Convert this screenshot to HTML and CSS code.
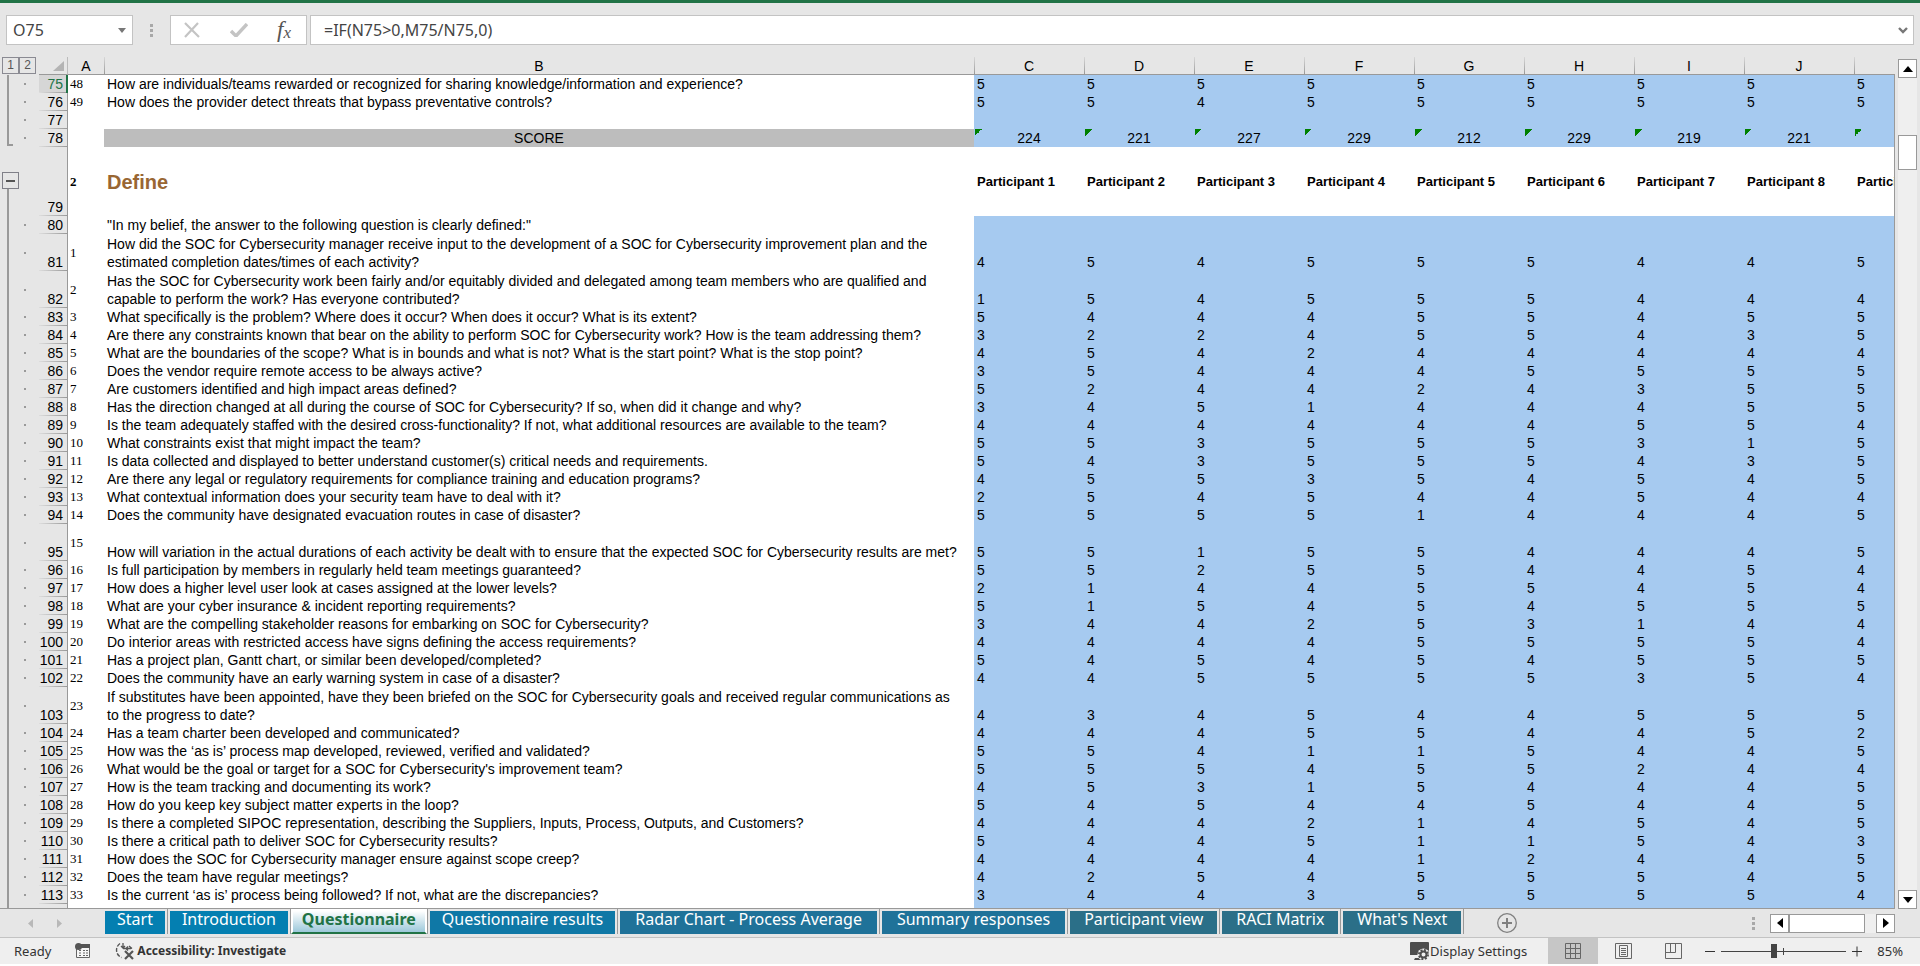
FILE: index.html
```html
<!DOCTYPE html>
<html lang="en">
<head>
<meta charset="utf-8">
<title>Questionnaire</title>
<link rel="stylesheet" href="styles.css">
</head>
<body>
<header class="formula-bar">
  <div class="name-box">
    <input class="name-input" aria-label="Name box" value="O75">
    <button class="plain" aria-label="Name list"><svg width="8" height="5" viewBox="0 0 8 5"><path d="M0 0h8L4 5z" fill="#777"/></svg></button>
  </div>
  <span class="grip"></span>
  <div class="fx-box">
    <button class="plain" aria-label="Cancel"><svg width="18" height="16" viewBox="0 0 18 16"><path d="M2 1l14 14M15 1L2 15" stroke="#c4c4c4" stroke-width="2.2" fill="none"/></svg></button>
    <button class="plain" aria-label="Enter"><svg width="18" height="14" viewBox="0 0 18 14"><path d="M1 8l5 5L17 1" stroke="#c4c4c4" stroke-width="3.4" fill="none"/></svg></button>
    <button class="plain fx" aria-label="Insert function">f<span class="fx-x">x</span></button>
  </div>
  <div class="formula-box">
    <input class="formula-input" aria-label="Formula" value="=IF(N75&gt;0,M75/N75,0)">
    <button class="plain" aria-label="Expand formula bar"><svg width="10" height="7" viewBox="0 0 10 7"><path d="M1 1l4 4 4-4" stroke="#777" stroke-width="2.4" fill="none"/></svg></button>
  </div>
</header>

<main class="workspace">
  <div class="sheet">
    <table class="grid">
      <colgroup><col class="c-gutter"><col class="c-head"><col class="c-a"><col class="c-b"><col class="c-n"><col class="c-n"><col class="c-n"><col class="c-n"><col class="c-n"><col class="c-n"><col class="c-n"><col class="c-n"><col></colgroup>
      <thead>
        <tr><td class="levels"><div class="level-row"><button class="level">1</button><button class="level">2</button></div><td class="corner"><svg width="11" height="10" viewBox="0 0 11 10"><path d="M11 0v10H0z" fill="#b4b4b4"/></svg><th class="first">A<th>B<th>C<th>D<th>E<th>F<th>G<th>H<th>I<th>J<th>
      </thead>
      <tbody>
        <tr><td class="line dot"><th class="current">75<td>48<td>How are individuals/teams rewarded or recognized for sharing knowledge/information and experience?<td>5<td>5<td>5<td>5<td>5<td>5<td>5<td>5<td>5
        <tr><td class="line dot"><th>76<td>49<td>How does the provider detect threats that bypass preventative controls?<td>5<td>5<td>4<td>5<td>5<td>5<td>5<td>5<td>5
        <tr><td class="line dot"><th>77<td><td><td><td><td><td><td><td><td><td><td>
        <tr class="score"><td class="line-end dot"><th>78<td><td>SCORE<td>224<td>221<td>227<td>229<td>212<td>229<td>219<td>221<td>
        <tr class="section"><td class="line-start"><button class="collapse" aria-label="Collapse group"></button><th>79<td>2<td>Define<td>Participant 1<td>Participant 2<td>Participant 3<td>Participant 4<td>Participant 5<td>Participant 6<td>Participant 7<td>Participant 8<td>Participant 9
        <tr><td class="line dot"><th>80<td><td>"In my belief, the answer to the following question is clearly defined:"<td><td><td><td><td><td><td><td><td>
        <tr class="tall"><td class="line dot"><th>81<td>1<td>How did the SOC for Cybersecurity manager receive input to the development of a SOC for Cybersecurity improvement plan and the<br>estimated completion dates/times of each activity?<td>4<td>5<td>4<td>5<td>5<td>5<td>4<td>4<td>5
        <tr class="tall"><td class="line dot"><th>82<td>2<td>Has the SOC for Cybersecurity work been fairly and/or equitably divided and delegated among team members who are qualified and<br>capable to perform the work? Has everyone contributed?<td>1<td>5<td>4<td>5<td>5<td>5<td>4<td>4<td>4
        <tr><td class="line dot"><th>83<td>3<td>What specifically is the problem? Where does it occur? When does it occur? What is its extent?<td>5<td>4<td>4<td>4<td>5<td>5<td>4<td>5<td>5
        <tr><td class="line dot"><th>84<td>4<td>Are there any constraints known that bear on the ability to perform SOC for Cybersecurity work? How is the team addressing them?<td>3<td>2<td>2<td>4<td>5<td>5<td>4<td>3<td>5
        <tr><td class="line dot"><th>85<td>5<td>What are the boundaries of the scope? What is in bounds and what is not? What is the start point? What is the stop point?<td>4<td>5<td>4<td>2<td>4<td>4<td>4<td>4<td>4
        <tr><td class="line dot"><th>86<td>6<td>Does the vendor require remote access to be always active?<td>3<td>5<td>4<td>4<td>4<td>5<td>5<td>5<td>5
        <tr><td class="line dot"><th>87<td>7<td>Are customers identified and high impact areas defined?<td>5<td>2<td>4<td>4<td>2<td>4<td>3<td>5<td>5
        <tr><td class="line dot"><th>88<td>8<td>Has the direction changed at all during the course of SOC for Cybersecurity? If so, when did it change and why?<td>3<td>4<td>5<td>1<td>4<td>4<td>4<td>5<td>5
        <tr><td class="line dot"><th>89<td>9<td>Is the team adequately staffed with the desired cross-functionality? If not, what additional resources are available to the team?<td>4<td>4<td>4<td>4<td>4<td>4<td>5<td>5<td>4
        <tr><td class="line dot"><th>90<td>10<td>What constraints exist that might impact the team?<td>5<td>5<td>3<td>5<td>5<td>5<td>3<td>1<td>5
        <tr><td class="line dot"><th>91<td>11<td>Is data collected and displayed to better understand customer(s) critical needs and requirements.<td>5<td>4<td>3<td>5<td>5<td>5<td>4<td>3<td>5
        <tr><td class="line dot"><th>92<td>12<td>Are there any legal or regulatory requirements for compliance training and education programs?<td>4<td>5<td>5<td>3<td>5<td>4<td>5<td>4<td>5
        <tr><td class="line dot"><th>93<td>13<td>What contextual information does your security team have to deal with it?<td>2<td>5<td>4<td>5<td>4<td>4<td>5<td>4<td>4
        <tr><td class="line dot"><th>94<td>14<td>Does the community have designated evacuation routes in case of disaster?<td>5<td>5<td>5<td>5<td>1<td>4<td>4<td>4<td>5
        <tr class="tall"><td class="line dot"><th>95<td>15<td>How will variation in the actual durations of each activity be dealt with to ensure that the expected SOC for Cybersecurity results are met?<td>5<td>5<td>1<td>5<td>5<td>4<td>4<td>4<td>5
        <tr><td class="line dot"><th>96<td>16<td>Is full participation by members in regularly held team meetings guaranteed?<td>5<td>5<td>2<td>5<td>5<td>4<td>4<td>5<td>4
        <tr><td class="line dot"><th>97<td>17<td>How does a higher level user look at cases assigned at the lower levels?<td>2<td>1<td>4<td>4<td>5<td>5<td>4<td>5<td>4
        <tr><td class="line dot"><th>98<td>18<td>What are your cyber insurance &amp; incident reporting requirements?<td>5<td>1<td>5<td>4<td>5<td>4<td>5<td>5<td>5
        <tr><td class="line dot"><th>99<td>19<td>What are the compelling stakeholder reasons for embarking on SOC for Cybersecurity?<td>3<td>4<td>4<td>2<td>5<td>3<td>1<td>4<td>4
        <tr><td class="line dot"><th>100<td>20<td>Do interior areas with restricted access have signs defining the access requirements?<td>4<td>4<td>4<td>4<td>5<td>5<td>5<td>5<td>4
        <tr><td class="line dot"><th>101<td>21<td>Has a project plan, Gantt chart, or similar been developed/completed?<td>5<td>4<td>5<td>4<td>5<td>4<td>5<td>5<td>5
        <tr><td class="line dot"><th>102<td>22<td>Does the community have an early warning system in case of a disaster?<td>4<td>4<td>5<td>5<td>5<td>5<td>3<td>5<td>4
        <tr class="tall"><td class="line dot"><th>103<td>23<td>If substitutes have been appointed, have they been briefed on the SOC for Cybersecurity goals and received regular communications as<br>to the progress to date?<td>4<td>3<td>4<td>5<td>4<td>4<td>5<td>5<td>5
        <tr><td class="line dot"><th>104<td>24<td>Has a team charter been developed and communicated?<td>4<td>4<td>4<td>5<td>5<td>4<td>4<td>5<td>2
        <tr><td class="line dot"><th>105<td>25<td>How was the ‘as is’ process map developed, reviewed, verified and validated?<td>5<td>5<td>4<td>1<td>1<td>5<td>4<td>4<td>5
        <tr><td class="line dot"><th>106<td>26<td>What would be the goal or target for a SOC for Cybersecurity's improvement team?<td>5<td>5<td>5<td>4<td>5<td>5<td>2<td>4<td>4
        <tr><td class="line dot"><th>107<td>27<td>How is the team tracking and documenting its work?<td>4<td>5<td>3<td>1<td>5<td>4<td>4<td>4<td>5
        <tr><td class="line dot"><th>108<td>28<td>How do you keep key subject matter experts in the loop?<td>5<td>4<td>5<td>4<td>4<td>5<td>4<td>4<td>5
        <tr><td class="line dot"><th>109<td>29<td>Is there a completed SIPOC representation, describing the Suppliers, Inputs, Process, Outputs, and Customers?<td>4<td>4<td>4<td>2<td>1<td>4<td>5<td>4<td>5
        <tr><td class="line dot"><th>110<td>30<td>Is there a critical path to deliver SOC for Cybersecurity results?<td>5<td>4<td>4<td>5<td>1<td>1<td>5<td>4<td>3
        <tr><td class="line dot"><th>111<td>31<td>How does the SOC for Cybersecurity manager ensure against scope creep?<td>4<td>4<td>4<td>4<td>1<td>2<td>4<td>4<td>5
        <tr><td class="line dot"><th>112<td>32<td>Does the team have regular meetings?<td>4<td>2<td>5<td>4<td>5<td>5<td>5<td>4<td>5
        <tr><td class="line dot"><th>113<td>33<td>Is the current ‘as is’ process being followed? If not, what are the discrepancies?<td>3<td>4<td>4<td>3<td>5<td>5<td>5<td>5<td>4
        <tr><td class="line"><th><td><td><td><td><td><td><td><td><td><td><td>
      </tbody>
    </table>
  </div>
  <div class="vscroll">
    <button class="arrow" aria-label="Scroll up"><svg width="10" height="6" viewBox="0 0 10 6"><path d="M5 0l5 6H0z"/></svg></button>
    <div class="vtrack"><div class="vthumb"></div></div>
    <button class="arrow" aria-label="Scroll down"><svg width="10" height="6" viewBox="0 0 10 6"><path d="M0 0h10L5 6z"/></svg></button>
  </div>
</main>

<nav class="tab-bar">
  <div class="tab-nav">
    <button class="plain" aria-label="Previous sheet"><svg width="5" height="9" viewBox="0 0 5 9"><path d="M5 0v9L0 4.5z" fill="#b8b8b8"/></svg></button>
    <button class="plain" aria-label="Next sheet"><svg width="5" height="9" viewBox="0 0 5 9"><path d="M0 0v9l5-4.500z" fill="#b8b8b8"/></svg></button>
  </div>
  <div class="tabs">
    <button class="tab t1">Start</button>
    <button class="tab t1">Introduction</button>
    <button class="tab active">Questionnaire</button>
    <button class="tab t2">Questionnaire results</button>
    <button class="tab t3">Radar Chart - Process Average</button>
    <button class="tab t3">Summary responses</button>
    <button class="tab t4">Participant view</button>
    <button class="tab t4">RACI Matrix</button>
    <button class="tab t4">What's Next</button>
  </div>
  <button class="plain add" aria-label="New sheet"><svg width="20" height="20" viewBox="0 0 20 20"><circle cx="10" cy="10" r="9.300" fill="none" stroke="#808080" stroke-width="1.300"/><path d="M10 5v10M5 10h10" stroke="#808080" stroke-width="2"/></svg></button>
  <span class="grip"></span>
  <div class="hscroll">
    <button class="arrow" aria-label="Scroll left"><svg width="6" height="10" viewBox="0 0 6 10"><path d="M6 0v10L0 5z"/></svg></button>
    <div class="hthumb"></div>
    <button class="arrow" aria-label="Scroll right"><svg width="6" height="10" viewBox="0 0 6 10"><path d="M0 0v10l6-5z"/></svg></button>
  </div>
</nav>

<footer class="status-bar">
  <span class="ready">Ready</span>
  <button class="plain macro" aria-label="Record macro"><svg width="16" height="16" viewBox="0 0 16 16"><path d="M1.500 6v8.500h13V3" fill="#f6f6f6" stroke="#666"/><path d="M6 1h9v4H6z" fill="#555"/><circle cx="3.500" cy="3.500" r="3.500" fill="#555"/><path d="M4 7.500h2M8 7.500h2M11 7.500h2M4 10h2M8 10h2M11 10h2M4 12.500h2M8 12.500h2M11 12.500h2" stroke="#666"/></svg></button>
  <button class="plain access"><svg width="20" height="18" viewBox="0 0 20 18"><path d="M5 1.500A8 8 0 0 0 6.500 15.500" fill="none" stroke="#555" stroke-width="1.400" stroke-dasharray="4 1.500"/><path d="M8 1v5M6 4l2 2 2-2M8 6.500h8M13 4.500l-2 2 2 2M14 4l3 2.500" fill="none" stroke="#555" stroke-width="1.300"/><path d="M10 9l8 8M18 9l-8 8" stroke="#555" stroke-width="2.200"/></svg>Accessibility: Investigate</button>
  <span class="spacer"></span>
  <button class="plain display"><svg width="20" height="19" viewBox="0 0 20 19"><path d="M1 0h17a1 1 0 0 1 1 1v12H0V1a1 1 0 0 1 1-1zM5 16h6v2H4z" fill="#4d4d4d"/><circle cx="13.500" cy="12.500" r="6" fill="#eee"/><circle cx="13.500" cy="12.500" r="3" fill="none" stroke="#4d4d4d" stroke-width="2"/><circle cx="13.500" cy="12.500" r="4.600" fill="none" stroke="#4d4d4d" stroke-width="1.800" stroke-dasharray="2 1.610"/></svg>Display Settings</button>
  <div class="views">
    <button class="plain view selected" aria-label="Normal"><svg width="16" height="16" viewBox="0 0 16 16"><path d="M.5.5h15v15H.5zM5.500 0v16M10.500 0v16M0 5.500h16M0 10.500h16" fill="none" stroke="#666"/></svg></button>
    <button class="plain view" aria-label="Page layout"><svg width="17" height="16" viewBox="0 0 17 16"><path d="M.5.5h16v15H.5zM4.500 2.500h8v11h-8zM6 5.500h5M6 7.500h5M6 9.500h5M6 11.500h5" fill="none" stroke="#666"/></svg></button>
    <button class="plain view" aria-label="Page break preview"><svg width="17" height="16" viewBox="0 0 17 16"><path d="M.5.5h16v15H.5zM.5 9.500h10v-9M5.500.5v9" fill="none" stroke="#666"/></svg></button>
  </div>
  <button class="plain zoom-step" aria-label="Zoom out"><svg width="10" height="11" viewBox="0 0 10 11"><path d="M0 5.500h10" stroke="#333"/></svg></button>
  <input class="zoom" type="range" min="0" max="100" value="42" aria-label="Zoom">
  <button class="plain zoom-step" aria-label="Zoom in"><svg width="10" height="11" viewBox="0 0 10 11"><path d="M0 5.500h10M5 .5v10" stroke="#333"/></svg></button>
  <span class="percent">85%</span>
</footer>
</body>
</html>
```
FILE: styles.css
```css
* { box-sizing: border-box; }
body {
  margin: 0;
  height: 100vh;
  display: flex;
  flex-direction: column;
  overflow: hidden;
  background: #e6e6e6;
  color: #000;
  font: 14px/18px "Liberation Sans", sans-serif;
  border-top: 3px solid #217346;
  border-bottom: 2px solid #fff;
}
button, input { font: inherit; color: inherit; margin: 0; padding: 0; }
.plain {
  border: 0;
  background: none;
  display: flex;
  align-items: center;
  justify-content: center;
}

/* Formula bar */
.formula-bar {
  display: flex;
  align-items: center;
  padding: 12px 6px;
  height: 54px;
  font-family: "Noto Sans", sans-serif;
  font-size: 16px;
  color: #444;
}
.name-box, .fx-box, .formula-box {
  display: flex;
  align-items: center;
  height: 30px;
  background: #fff;
  border: 1px solid #c3c3c3;
}
.name-box { width: 127px; padding: 0 6px; }
.name-input, .formula-input {
  flex: 1;
  min-width: 0;
  border: 0;
  outline: 0;
  background: none;
}
.grip {
  width: 3px;
  height: 13px;
  margin: 0 17px;
  background: repeating-linear-gradient(#a8a8a8 0 3px, transparent 3px 5px);
}
.fx-box { width: 137px; justify-content: space-between; padding: 0 15px 0 12px; margin-right: 3px; }
.fx { font: italic 23px/24px "Liberation Serif", serif; color: #555; }
.fx-x { font-size: 17px; padding-top: 5px; }
.formula-box { flex: 1; padding: 0 5px 0 13px; }

/* Worksheet */
.workspace { flex: 1; min-height: 0; display: flex; }
.sheet { flex: 1; min-width: 0; overflow: hidden; border-bottom: 1px solid #999; }
.grid { width: 100%; table-layout: fixed; border-collapse: separate; border-spacing: 0; }
.c-gutter { width: 39px; }
.c-head { width: 29px; }
.c-a { width: 36px; }
.c-b { width: 870px; }
.c-n { width: 110px; }
.grid td, .grid th { padding: 0; height: 18px; font-weight: normal; white-space: nowrap; overflow: hidden; }
.grid thead th {
  line-height: 15px;
  padding-top: 2px;
  border-bottom: 1px solid #999;
  background: linear-gradient(#d8d8d8, #999) 0 0 / 1px 100% no-repeat;
}
.grid thead th.first { background: none; }
.grid .levels { background: #e6e6e6; padding-left: 2px; vertical-align: top; }
.level-row { display: flex; }
.level {
  width: 17px;
  height: 17px;
  border: 1px solid #8a8a92;
  background: none;
  color: #555;
  font-size: 12px;
  line-height: 15px;
}
.grid .corner {
  text-align: right;
  padding-right: 3px;
  line-height: 0;
  vertical-align: middle;
  border-right: 1px solid #bbb;
  border-bottom: 1px solid #999;
}
.grid tbody td { vertical-align: bottom; padding-left: 3px; background: #a6caf0; }
.grid tbody th {
  vertical-align: bottom;
  text-align: right;
  padding-right: 4px;
  border-right: 1px solid #999;
  background: linear-gradient(90deg, #ddd, #999) 0 100% / 100% 1px no-repeat;
}
.grid tbody th.current {
  color: #217346;
  background-color: #d6d6d6;
  border-right: 2px solid #217346;
  padding-right: 3px;
}
.grid tbody td:nth-child(3) {
  background: #fff;
  vertical-align: middle;
  padding-left: 2px;
  font-family: "Liberation Serif", serif;
  font-size: 13px;
}
.grid tbody td:nth-child(4) { background: #fff; }
.grid tbody td:last-child { border-right: 1px solid #999; }
.tall { height: 37px; }

.grid tbody td:first-child { padding: 0; background-color: #e6e6e6; background-repeat: no-repeat; }
.grid tbody td.line {
  background-image: linear-gradient(#999, #999), linear-gradient(#999, #999);
  background-size: 2px 100%, 2px 2px;
  background-position: 7px 0, 24px 50%;
}
.grid tbody td.line:not(.dot) { background-size: 2px 100%, 0 0; }
.grid tbody td.line-end {
  background-image: linear-gradient(#999, #999), linear-gradient(#999, #999), linear-gradient(#999, #999);
  background-size: 2px 16px, 6px 2px, 2px 2px;
  background-position: 7px 0, 7px 15px, 24px 50%;
}
.grid tbody td.line-start {
  background-image: linear-gradient(#999, #999);
  background-size: 2px 27px;
  background-position: 7px 100%;
  vertical-align: top;
}
.collapse {
  display: block;
  width: 17px;
  height: 17px;
  margin: 25px 0 0 2px;
  border: 1px solid #808088;
  background: linear-gradient(#555, #555) 50% 50% / 9px 2px no-repeat #e6e6e6;
}

.score td:nth-child(n+4) { text-align: center; }
.grid .score td:nth-child(4) { background: #bdbdbd; padding: 0; }
.grid .score td:nth-child(n+5) {
  padding: 0;
  background: linear-gradient(135deg, #008000 50%, transparent 50%) 1px 0 / 7px 7px no-repeat #a6caf0;
}
.section { height: 69px; }
.grid .section td:nth-child(n+3) { background-color: #fff; vertical-align: middle; font-weight: bold; font-size: 13px; }
.grid .section td:nth-child(4) { font-size: 20px; line-height: 24px; color: #996633; }

/* Scroll bars */
.vscroll { width: 25px; padding: 2px 3px 0; display: flex; flex-direction: column; }
.arrow {
  flex: none;
  width: 19px;
  height: 19px;
  border: 1px solid #999;
  background: #fff;
  display: flex;
  align-items: center;
  justify-content: center;
}
.vtrack { flex: 1; background: #efefef; padding-top: 57px; }
.vthumb { height: 35px; background: #fff; border: 1px solid #999; }
.hscroll { display: flex; width: 125px; background: #efefef; }
.hthumb { width: 76px; margin-right: auto; border: 1px solid #999; background: #fff; }

/* Sheet tabs */
.tab-bar {
  display: flex;
  align-items: center;
  height: 29px;
  padding-right: 25px;
  border-bottom: 1px solid #c3c3c3;
}
.tab-nav { display: flex; width: 103px; padding-left: 28px; gap: 24px; }
.tabs { display: flex; align-self: stretch; }
.tab {
  height: 25px;
  padding: 0 12px 6px;
  border: 2px solid #e6e6e6;
  border-bottom: 0;
  color: #fff;
  font: 16px/17px "Noto Sans", sans-serif;
  background: #0a7fb0;
  box-shadow: 1px 0 0 #999;
  margin-right: 1px;
  white-space: nowrap;
}
.t1 { background: #047fb1; }
.t2 { background: #0f78a6; }
.t3 { background: #1f7299; padding: 0 15px 6px; }
.t4 { background: #2b6f88; padding: 0 14px 6px; }
.active {
  border: 2px solid #fff;
  border-bottom-color: #217346;
  padding: 0 9px 4px;
  color: #217346;
  font-weight: bold;
  background: linear-gradient(#fff, #9cc8da);
}
.add { margin-left: 33px; }
.tab-bar .grip { margin: 0 15px 0 auto; }

/* Status bar */
.status-bar {
  display: flex;
  align-items: center;
  height: 26px;
  padding: 0 17px 0 14px;
  background: #efefef;
  color: #333;
  font-family: "Noto Sans", sans-serif;
  font-size: 12px;
}
.ready, .display, .percent { font-size: 13px; }
.macro { margin: 0 24px 0 24px; }
.access { gap: 2px; font-weight: bold; }
.display { gap: 0; }
.spacer { flex: 1; }
.views { display: flex; align-self: stretch; margin: 0 7px 0 21px; }
.view { width: 50px; }
.selected { background: #c6c6c6; }
.zoom {
  appearance: none;
  width: 125px;
  height: 14px;
  margin: 0 6px;
  background:
    linear-gradient(#444, #444) 62px 50% / 1px 7px no-repeat,
    linear-gradient(#444, #444) 0 50% / 100% 1px no-repeat;
}
.zoom::-webkit-slider-thumb { appearance: none; width: 6px; height: 14px; background: #444; }
.percent { margin-left: auto; padding-left: 15px; }
```
